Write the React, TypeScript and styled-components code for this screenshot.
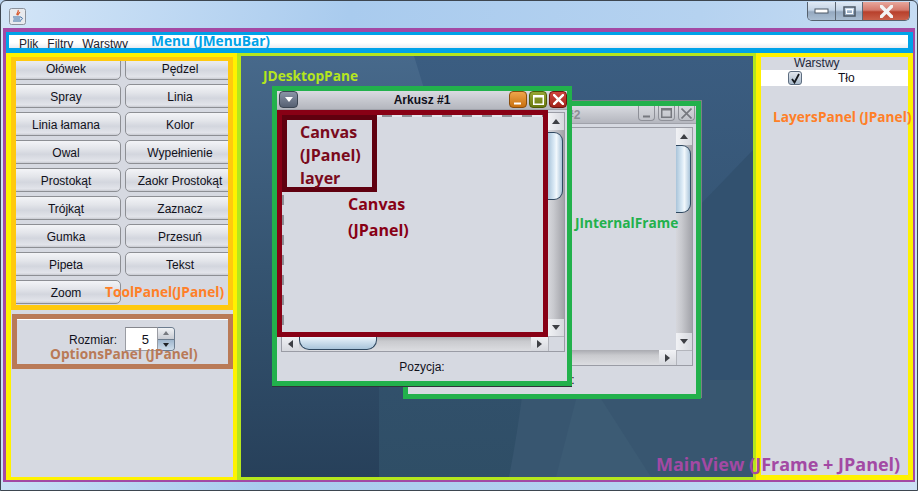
import React from "react";
import styled, { createGlobalStyle } from "styled-components";

const GlobalStyle = createGlobalStyle`
  html, body {
    margin: 0;
    padding: 0;
    background: #b9d3ee;
  }
  * {
    box-sizing: border-box;
  }
`;

const SWING_FONT = `"Liberation Sans", Arial, sans-serif`;
const NOTE_FONT = `"Open Sans", "Noto Sans", sans-serif`;

const Window = styled.div`
  position: relative;
  width: 918px;
  height: 491px;
  padding: 0 2px 8px;
  border: 1px solid #3d4650;
  border-radius: 6px 6px 0 0;
  background: linear-gradient(100deg, #d3e5f7 0%, #a9cbee 35%, #b5d2f0 70%, #cde0f4 100%);
  overflow: hidden;
  font-family: ${SWING_FONT};
  font-size: 12px;
  color: #10101a;
`;

const TitleBar = styled.div`
  position: relative;
  height: 27px;
  display: flex;
  align-items: flex-start;
  justify-content: space-between;
`;

const AppIcon = styled.svg`
  width: 17px;
  height: 17px;
  margin: 7px 0 0 6px;
`;

const CaptionButtons = styled.div`
  display: flex;
  height: 19px;
  margin: 1px 5px 0 0;
  border: 1px solid #56616e;
  border-top: none;
  border-radius: 0 0 5px 5px;
  overflow: hidden;
`;

const CaptionButton = styled.div<{ $w: number; $close?: boolean }>`
  width: ${({ $w }) => $w}px;
  display: flex;
  align-items: center;
  justify-content: center;
  border-right: ${({ $close }) => ($close ? "none" : "1px solid #5d6875")};
  background: ${({ $close }) =>
    $close
      ? "linear-gradient(#e8a79c 0%, #d4796c 45%, #b8402c 55%, #c9604a 100%)"
      : "linear-gradient(#dfe9f4 0%, #c3d3e5 45%, #95a9c0 55%, #a9bdd2 100%)"};
`;

const MainView = styled.div`
  position: relative;
  height: 454px;
  border: solid #a349a4;
  border-width: 4px 2px 2px 3px;
`;

const MenuBar = styled.div`
  position: relative;
  height: 21px;
  display: flex;
  gap: 9px;
  padding-left: 10px;
  border: solid #00a2e8;
  border-width: 3px 5px 5px 3px;
  background: linear-gradient(#ffffff 60%, #e9ebf1 100%);
  overflow: hidden;
`;

const MenuItem = styled.span`
  line-height: 15px;
  margin-top: 2px;
  color: #22222c;
`;

const Body = styled.div`
  display: flex;
  height: 427px;
`;

const LeftColumn = styled.div`
  width: 231px;
  border: solid #fff200;
  border-width: 4px 4px 3px 5px;
  background: #d6d9e1;
`;

const ToolPanel = styled.div`
  position: relative;
  height: 253px;
  border: 5px solid #ffc90e;
  border-top-width: 4px;
  overflow: hidden;
`;

const ToolGrid = styled.div`
  display: grid;
  grid-template-columns: 110px 110px;
  grid-auto-rows: 24px;
  gap: 4px;
  margin: -5px 0 0 -5px;
`;

const ToolButton = styled.div`
  display: flex;
  align-items: center;
  justify-content: center;
  padding-top: 1px;
  border: 1px solid #8d8f94;
  border-radius: 5px;
  background: linear-gradient(#f3f4f7 0%, #e3e5ea 35%, #d3d6de 60%, #e2e4ea 90%, #c9cbd2 100%);
  white-space: nowrap;
`;

const OptionsPanel = styled.div`
  position: relative;
  display: flex;
  align-items: flex-start;
  height: 55px;
  margin: 4px 0 0 1px;
  padding: 8px 0 0 52px;
  border: 5px solid #b97a57;
  background: #d6d9e1;
  box-shadow: inset 0 1px 0 #ffffff;
`;

const SpinnerLabel = styled.span`
  width: 56px;
  padding-top: 1px;
  line-height: 24px;
`;

const SpinnerField = styled.div`
  width: 33px;
  height: 24px;
  padding-right: 8px;
  border: 1px solid #9a9ca3;
  border-top-color: #85878d;
  background: #ffffff;
  text-align: right;
  font-size: 13px;
  line-height: 23px;
`;

const SpinnerArrows = styled.div`
  display: flex;
  flex-direction: column;
  width: 17px;
  height: 24px;
  border: 1px solid #6c7c8e;
  border-left: none;
  border-radius: 0 4px 4px 0;
  overflow: hidden;
`;

const SpinnerArrow = styled.div<{ $down?: boolean }>`
  flex: 1;
  display: flex;
  align-items: center;
  justify-content: center;
  background: ${({ $down }) =>
    $down ? "linear-gradient(#9fb6cd, #cfdeec)" : "linear-gradient(#f0f2f5, #c9ccd3)"};
  & + & {
    border-top: 1px solid #6c7c8e;
  }
`;

const Triangle = styled.i<{ $dir: "up" | "down" | "left" | "right"; $size?: number; $color?: string }>`
  display: block;
  width: 0;
  height: 0;
  border-style: solid;
  border-color: transparent;
  ${({ $dir, $size = 4, $color = "#3d3f44" }) => {
    const s = $size;
    const h = s + 1;
    if ($dir === "up") return `border-width: 0 ${s}px ${h}px; border-bottom-color: ${$color};`;
    if ($dir === "down") return `border-width: ${h}px ${s}px 0; border-top-color: ${$color};`;
    if ($dir === "left") return `border-width: ${s}px ${h}px ${s}px 0; border-right-color: ${$color};`;
    return `border-width: ${s}px 0 ${s}px ${h}px; border-left-color: ${$color};`;
  }}
`;

const Desktop = styled.div`
  position: relative;
  width: 519px;
  border: solid #b5e61d;
  border-width: 3px 3px 3px 4px;
  background: #3a5a7a;
  overflow: hidden;
`;

const Wallpaper = styled.svg`
  position: absolute;
  inset: 0;
  width: 100%;
  height: 100%;
`;

const InternalFrame = styled.div<{ $active?: boolean }>`
  position: absolute;
  display: flex;
  flex-direction: column;
  background: #d6d9e1;
  border: 5px solid #22b14c;
  ${({ $active }) =>
    $active
      ? "left: 31px; top: 30px; width: 300px; height: 300px; box-shadow: 0 1px 0 #30343a;"
      : "left: 162px; top: 45px; width: 298px; height: 298px; box-shadow: 1px -1px 0 #7d8086;"}
`;

const FrameTitle = styled.div<{ $active?: boolean }>`
  position: relative;
  flex: none;
  height: ${({ $active }) => ($active ? 19 : 18)}px;
  display: flex;
  align-items: center;
  justify-content: center;
  border-bottom: 1px solid #a0a2aa;
  font-weight: 700;
  color: ${({ $active }) => ($active ? "#10101a" : "#8c8e96")};
  background: linear-gradient(#d9dbe1 0%, #c4c6cd 55%, #b4b6be 100%);
`;

const FrameControls = styled.div<{ $active?: boolean }>`
  position: absolute;
  top: 0;
  right: ${({ $active }) => ($active ? 0 : 1)}px;
  display: flex;
  gap: ${({ $active }) => ($active ? 2 : 3)}px;
`;

const FrameMenuButton = styled.div`
  position: absolute;
  left: 2px;
  top: 0;
  width: 19px;
  height: 17px;
  display: flex;
  align-items: center;
  justify-content: center;
  border: 1px solid #3b4552;
  border-radius: 4px;
  background: linear-gradient(#8a94a6, #566072);
`;

const FrameControl = styled.div<{ $tone: "orange" | "green" | "red" | "idle" }>`
  width: ${({ $tone }) => ($tone === "idle" ? 17 : 18)}px;
  height: ${({ $tone }) => ($tone === "idle" ? 15 : 17)}px;
  display: flex;
  align-items: center;
  justify-content: center;
  border: 1px solid;
  border-radius: 4px;
  ${({ $tone }) =>
    $tone === "orange"
      ? "border-color: #8a4d0c; background: linear-gradient(#efa54c, #c8700f);"
      : $tone === "green"
        ? "border-color: #4f5c08; background: linear-gradient(#97a535, #6b7a10);"
        : $tone === "red"
          ? "border-color: #6d1510; background: linear-gradient(#d0483e, #a3231b);"
          : "border-color: #8e9098; border-top: none; border-radius: 0 0 4px 4px; background: linear-gradient(#d5d7dd, #c0c2c9);"}
`;

const ScrollPane = styled.div<{ $active?: boolean }>`
  flex: none;
  display: grid;
  grid-template-columns: 1fr 16px;
  grid-template-rows: 1fr 15px;
  height: ${({ $active }) => ($active ? 240 : 239)}px;
  margin: ${({ $active }) => ($active ? "2px 2px 0 4px" : "3px 3px 0 0")};
  border: 1px solid #9a9ca5;
  background: #d6d9e1;
`;

const Viewport = styled.div`
  background: #d6d9e1;
`;

const ScrollCorner = styled.div`
  border-left: 1px solid #b3b5bc;
  border-top: 1px solid #b3b5bc;
  background: #d6d9e1;
`;

const VerticalBar = styled.div`
  display: flex;
  flex-direction: column;
`;

const HorizontalBar = styled.div`
  display: flex;
`;

const ArrowButton = styled.div<{ $horizontal?: boolean }>`
  flex: none;
  ${({ $horizontal }) => ($horizontal ? "width: 17px;" : "height: 17px;")}
  display: flex;
  align-items: center;
  justify-content: center;
  background: ${({ $horizontal }) =>
    $horizontal ? "linear-gradient(#f1f2f5, #d6d8de)" : "linear-gradient(90deg, #f1f2f5, #d6d8de)"};
`;

const VerticalTrack = styled.div`
  flex: 1;
  min-height: 0;
  background: linear-gradient(90deg, #d6d7dc 0%, #c8c9ce 35%, #a2a3a9 100%);
`;

const HorizontalTrack = styled.div`
  flex: 1;
  min-width: 0;
  background: linear-gradient(#a9aab0 0%, #c9cace 35%, #dcdde1 100%);
`;

const VerticalThumb = styled.div<{ $offset: number }>`
  width: 15px;
  height: 68px;
  margin-top: ${({ $offset }) => $offset}px;
  border: 1px solid #2f4860;
  border-left: none;
  border-radius: 0 9px 9px 0;
  background: linear-gradient(90deg, #a9c4da 0%, #dcebf6 45%, #f2f8fc 60%, #a9c4da 100%);
`;

const HorizontalThumb = styled.div<{ $offset: number }>`
  width: 78px;
  height: 14px;
  margin-left: ${({ $offset }) => $offset}px;
  border: 1px solid #2f4860;
  border-top: none;
  border-radius: 0 0 10px 10px;
  background: linear-gradient(#f2f8fc 0%, #cfe0ee 45%, #a9c4da 100%);
`;

const FrameFooter = styled.div`
  flex: 1;
  display: flex;
  align-items: center;
  justify-content: center;
`;

const CanvasOutline = styled.div`
  position: absolute;
  left: 0;
  top: 19px;
  width: 271px;
  height: 227px;
  border: 5px solid #880015;
  background: #d6d9e1;
`;

const CanvasSurface = styled.div`
  position: relative;
  height: 100%;
  background:
    repeating-linear-gradient(90deg, #8f8f96 0 10px, #e4e6ec 10px 20px) top left / 100% 2px no-repeat,
    repeating-linear-gradient(180deg, #8f8f96 0 10px, #d6d9e1 10px 20px) top left / 2px 100% no-repeat;
`;

const LayerBox = styled.div`
  position: absolute;
  left: 0;
  top: 0;
  width: 95px;
  height: 77px;
  padding: 1px 0 0 13px;
  border: 5px solid #60000f;
  background: #d6d9e1;
  color: #7a0a1c;
  font: 700 16px/23px ${NOTE_FONT};
`;

const CanvasNote = styled.div`
  position: absolute;
  left: 66px;
  top: 76px;
  color: #880015;
  font: 700 16px/26px ${NOTE_FONT};
`;

const RightPanel = styled.div`
  position: relative;
  width: 157px;
  border: solid #fff200;
  border-width: 4px 5px 5px 5px;
  background: #d6d9e1;
`;

const LayersHeader = styled.div`
  height: 13px;
  padding-left: 33px;
  line-height: 12px;
  color: #22283a;
`;

const LayerRow = styled.div`
  display: flex;
  align-items: center;
  height: 16px;
  padding-left: 27px;
  background: #ffffff;
`;

const LayerCheck = styled.div`
  width: 14px;
  height: 14px;
  display: flex;
  align-items: center;
  justify-content: center;
  border: 1px solid #5d6d80;
  border-radius: 3px;
  background: linear-gradient(#e3e8ee, #a9bacb);
`;

const LayerName = styled.span`
  margin-left: 36px;
`;

const Note = styled.span`
  position: absolute;
  z-index: 5;
  white-space: nowrap;
  font: 700 13.7px/18px ${NOTE_FONT};
  pointer-events: none;
`;

const MenuNote = styled(Note)`
  left: 142px;
  top: -3px;
  color: #00a2e8;
`;

const DesktopNote = styled(Note)`
  left: 22px;
  top: 11px;
  color: #b5e61d;
`;

const ToolNote = styled(Note)`
  left: 89px;
  top: 222px;
  color: #ff7f27;
`;

const OptionsNote = styled(Note)`
  left: 33px;
  top: 26px;
  color: #b97a57;
`;

const FrameNote = styled(Note)`
  left: 334px;
  top: 158px;
  color: #22b14c;
`;

const LayersNote = styled(Note)`
  left: 12px;
  top: 51px;
  color: #ff7f27;
`;

const MainNote = styled(Note)`
  left: 650px;
  top: 420px;
  color: #a349a4;
  font-size: 18px;
  line-height: 24px;
`;

const TOOLS = [
  "Ołówek",
  "Pędzel",
  "Spray",
  "Linia",
  "Linia łamana",
  "Kolor",
  "Owal",
  "Wypełnienie",
  "Prostokąt",
  "Zaokr Prostokąt",
  "Trójkąt",
  "Zaznacz",
  "Gumka",
  "Przesuń",
  "Pipeta",
  "Tekst",
  "Zoom",
];

const JavaIcon = () => (
  <AppIcon viewBox="0 0 17 17">
    <rect x="0.5" y="0.5" width="16" height="16" rx="2" fill="#e8eaee" stroke="#8b929c" />
    <path d="M9 2c1.5 2-2 3-1 5M11 4c-1 1.500-2.500 2-2 3.500" fill="none" stroke="#d8562a" strokeWidth="1.200" />
    <path d="M4 9h8M4.500 11h6.500M4 13h8" stroke="#3a6ea5" strokeWidth="1" />
    <path d="M12 9.500c2 0 2 2-.5 2.500" fill="none" stroke="#3a6ea5" strokeWidth="1" />
  </AppIcon>
);

const CloseGlyph = ({ color = "#fff", size = 11, width = 2.2 }: { color?: string; size?: number; width?: number }) => (
  <svg width={size} height={size} viewBox="0 0 10 10">
    <path d="M1 1l8 8M9 1l-8 8" stroke={color} strokeWidth={width} strokeLinecap="square" fill="none" />
  </svg>
);

const MaxGlyph = ({ color = "#fff" }: { color?: string }) => (
  <svg width="11" height="10" viewBox="0 0 11 10">
    <rect x="0.750" y="0.750" width="9.500" height="8.500" fill="none" stroke={color} strokeWidth="1.500" />
    <path d="M0 1.500h11" stroke={color} strokeWidth="2" />
  </svg>
);

const MinGlyph = ({ color = "#fff" }: { color?: string }) => (
  <svg width="10" height="10" viewBox="0 0 10 10">
    <path d="M1 8.500h7" stroke={color} strokeWidth="2" />
  </svg>
);

const Scrollers = ({ thumbV, thumbH }: { thumbV: number; thumbH?: number }) => (
  <>
    <VerticalBar>
      <ArrowButton>
        <Triangle $dir="up" />
      </ArrowButton>
      <VerticalTrack>
        <VerticalThumb $offset={thumbV} />
      </VerticalTrack>
      <ArrowButton>
        <Triangle $dir="down" />
      </ArrowButton>
    </VerticalBar>
    <HorizontalBar>
      <ArrowButton $horizontal>
        <Triangle $dir="left" />
      </ArrowButton>
      <HorizontalTrack>{thumbH !== undefined && <HorizontalThumb $offset={thumbH} />}</HorizontalTrack>
      <ArrowButton $horizontal>
        <Triangle $dir="right" />
      </ArrowButton>
    </HorizontalBar>
    <ScrollCorner />
  </>
);

export default function App() {
  return (
    <Window>
      <GlobalStyle />
      <TitleBar>
        <JavaIcon />
        <CaptionButtons>
          <CaptionButton $w={28}>
            <svg width="16" height="7" viewBox="0 0 16 7">
              <rect x="1" y="1" width="13" height="4" fill="#fff" stroke="#4c5866" />
            </svg>
          </CaptionButton>
          <CaptionButton $w={27}>
            <svg width="13" height="11" viewBox="0 0 13 11">
              <rect x="1" y="1" width="11" height="9" fill="none" stroke="#4c5866" strokeWidth="1.500" />
              <rect x="3.500" y="3.500" width="6" height="4" fill="none" stroke="#fff" strokeWidth="1" />
            </svg>
          </CaptionButton>
          <CaptionButton $w={46} $close>
            <CloseGlyph color="#f3f3f3" size={13} width={2.600} />
          </CaptionButton>
        </CaptionButtons>
      </TitleBar>

      <MainView>
        <MenuBar>
          <MenuItem>Plik</MenuItem>
          <MenuItem>Filtry</MenuItem>
          <MenuItem>Warstwy</MenuItem>
          <MenuNote>Menu (JMenuBar)</MenuNote>
        </MenuBar>

        <Body>
          <LeftColumn>
            <ToolPanel>
              <ToolGrid>
                {TOOLS.map((tool) => (
                  <ToolButton key={tool}>{tool}</ToolButton>
                ))}
              </ToolGrid>
              <ToolNote>ToolPanel(JPanel)</ToolNote>
            </ToolPanel>
            <OptionsPanel>
              <SpinnerLabel>Rozmiar:</SpinnerLabel>
              <SpinnerField>5</SpinnerField>
              <SpinnerArrows>
                <SpinnerArrow>
                  <Triangle $dir="up" $size={3} $color="#777a80" />
                </SpinnerArrow>
                <SpinnerArrow $down>
                  <Triangle $dir="down" $size={3} $color="#202226" />
                </SpinnerArrow>
              </SpinnerArrows>
              <OptionsNote>OptionsPanel (JPanel)</OptionsNote>
            </OptionsPanel>
          </LeftColumn>

          <Desktop>
            <Wallpaper viewBox="0 0 512 421" preserveAspectRatio="none">
              <defs>
                <linearGradient id="wall" x1="0" y1="0" x2="0" y2="1">
                  <stop offset="0" stopColor="#3b5d81" />
                  <stop offset="0.600" stopColor="#33526f" />
                  <stop offset="1" stopColor="#2f4e66" />
                </linearGradient>
                <linearGradient id="wallLeft" x1="0" y1="0" x2="0" y2="1">
                  <stop offset="0" stopColor="#47698b" />
                  <stop offset="0.500" stopColor="#355471" />
                  <stop offset="1" stopColor="#27405a" />
                </linearGradient>
              </defs>
              <rect width="512" height="421" fill="url(#wall)" />
              <path d="M0 0H173L184 36 138 324V421H0Z" fill="url(#wallLeft)" />
              <path d="M512 94L459 149V343H512Z" fill="#32516f" />
              <path d="M283 324Q277 375 268 421H512V324Z" fill="#385670" />
              <path d="M340 324L315 421H410L355 335Z" fill="#3c5b74" />
            </Wallpaper>

            <InternalFrame>
              <FrameTitle>
                Arkusz #2
                <FrameControls>
                  <FrameControl $tone="idle">
                    <MinGlyph color="#76787f" />
                  </FrameControl>
                  <FrameControl $tone="idle">
                    <MaxGlyph color="#76787f" />
                  </FrameControl>
                  <FrameControl $tone="idle">
                    <CloseGlyph color="#76787f" size={11} width={1.500} />
                  </FrameControl>
                </FrameControls>
              </FrameTitle>
              <ScrollPane>
                <Viewport />
                <Scrollers thumbV={0} />
              </ScrollPane>
              <FrameFooter>Pozycja:</FrameFooter>
            </InternalFrame>

            <InternalFrame $active>
              <FrameTitle $active>
                <FrameMenuButton>
                  <Triangle $dir="down" $size={4} $color="#ffffff" />
                </FrameMenuButton>
                Arkusz #1
                <FrameControls $active>
                  <FrameControl $tone="orange">
                    <MinGlyph />
                  </FrameControl>
                  <FrameControl $tone="green">
                    <MaxGlyph />
                  </FrameControl>
                  <FrameControl $tone="red">
                    <CloseGlyph />
                  </FrameControl>
                </FrameControls>
              </FrameTitle>
              <ScrollPane $active>
                <Viewport />
                <Scrollers thumbV={2} thumbH={0} />
              </ScrollPane>
              <FrameFooter>Pozycja:</FrameFooter>
              <CanvasOutline>
                <CanvasSurface>
                  <LayerBox>
                    Canvas
                    <br />
                    (JPanel)
                    <br />
                    layer
                  </LayerBox>
                  <CanvasNote>
                    Canvas
                    <br />
                    (JPanel)
                  </CanvasNote>
                </CanvasSurface>
              </CanvasOutline>
            </InternalFrame>

            <DesktopNote>JDesktopPane</DesktopNote>
            <FrameNote>JInternalFrame</FrameNote>
          </Desktop>

          <RightPanel>
            <LayersHeader>Warstwy</LayersHeader>
            <LayerRow>
              <LayerCheck>
                <svg width="11" height="11" viewBox="0 0 11 11">
                  <path d="M2 6l2.500 3.500L9 1" fill="none" stroke="#15181c" strokeWidth="1.800" />
                </svg>
              </LayerCheck>
              <LayerName>Tło</LayerName>
            </LayerRow>
            <LayersNote>LayersPanel (JPanel)</LayersNote>
          </RightPanel>
        </Body>
        <MainNote>MainView (JFrame + JPanel)</MainNote>
      </MainView>
    </Window>
  );
}
